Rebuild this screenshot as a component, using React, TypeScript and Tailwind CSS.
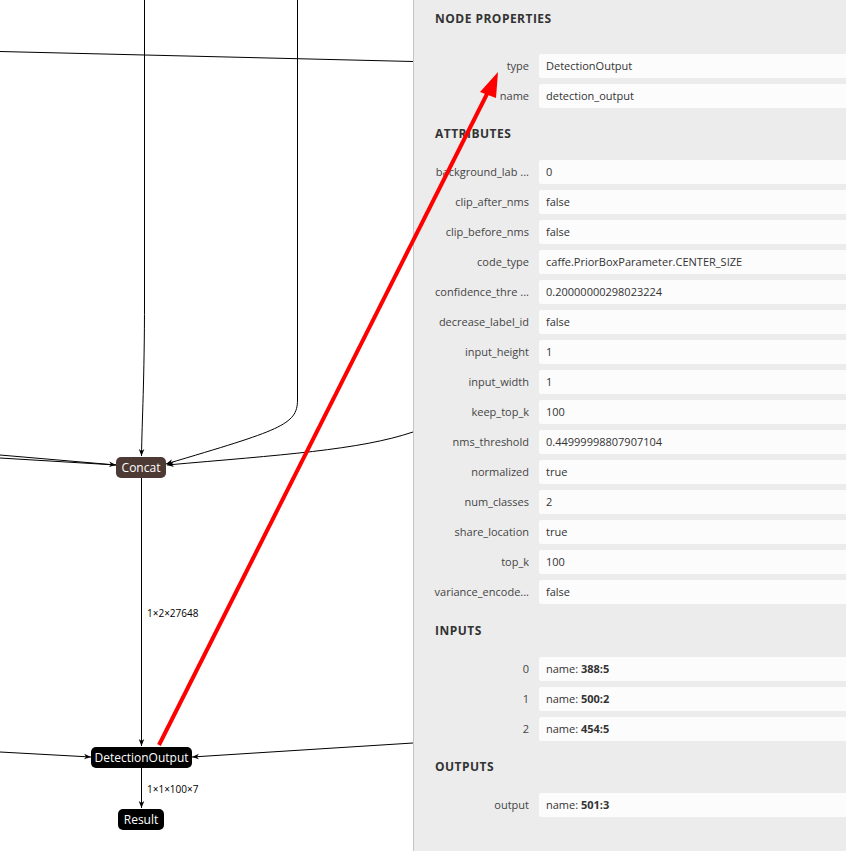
import React from 'react'

const font = { fontFamily: '"Open Sans", "Noto Sans", sans-serif' }

interface Row {
  label: string
  value: React.ReactNode
}

const props: Row[] = [
  { label: 'type', value: 'DetectionOutput' },
  { label: 'name', value: 'detection_output' },
]

const attributes: Row[] = [
  { label: 'background_lab ...', value: '0' },
  { label: 'clip_after_nms', value: 'false' },
  { label: 'clip_before_nms', value: 'false' },
  { label: 'code_type', value: 'caffe.PriorBoxParameter.CENTER_SIZE' },
  { label: 'confidence_thre ...', value: '0.20000000298023224' },
  { label: 'decrease_label_id', value: 'false' },
  { label: 'input_height', value: '1' },
  { label: 'input_width', value: '1' },
  { label: 'keep_top_k', value: '100' },
  { label: 'nms_threshold', value: '0.44999998807907104' },
  { label: 'normalized', value: 'true' },
  { label: 'num_classes', value: '2' },
  { label: 'share_location', value: 'true' },
  { label: 'top_k', value: '100' },
  { label: 'variance_encode...', value: 'false' },
]

const named = (n: string) => (
  <span>
    name: <span className="font-bold">{n}</span>
  </span>
)

const inputs: Row[] = [
  { label: '0', value: named('388:5') },
  { label: '1', value: named('500:2') },
  { label: '2', value: named('454:5') },
]

const outputs: Row[] = [{ label: 'output', value: named('501:3') }]

function Section({ title, rows, className, listClass }: { title: string; rows: Row[]; className: string; listClass: string }) {
  return (
    <div className={className}>
      <div className="pl-[21px] h-4 leading-4 text-[12px] font-bold tracking-[0.04em] text-[#333]">
        {title}
      </div>
      <div className={`flex flex-col gap-[6px] ${listClass}`}>
        {rows.map(r => (
          <div key={r.label} className="flex items-center h-6">
            <div className="w-[125px] pr-[10px] text-right text-[11px] text-[#444] whitespace-nowrap overflow-hidden">
              {r.label}
            </div>
            <div className="flex-1 h-6 bg-[#fcfcfc] rounded-l-[2px] pl-[7px] flex items-center text-[11px] text-[#333] whitespace-nowrap">
              {r.value}
            </div>
          </div>
        ))}
      </div>
    </div>
  )
}

function GraphNode({ label, className }: { label: string; className: string }) {
  return (
    <div
      className={`absolute h-[21px] rounded-[5px] flex items-center justify-center text-[12px] text-white whitespace-nowrap ${className}`}
    >
      {label}
    </div>
  )
}

function Graph() {
  return (
    <div className="relative w-[413px] h-full bg-white overflow-hidden">
      <svg className="absolute inset-0" width="413" height="851">
        <defs>
          <marker id="ah" viewBox="0 0 10 10" refX="10" refY="5" markerWidth="7" markerHeight="7" orient="auto">
            <path d="M0,1 L10,5 L0,9 L3,5 Z" fill="#000" />
          </marker>
        </defs>
        <g fill="none" stroke="#000" strokeWidth="1">
          <path d="M0,51.5 L413,61.5" />
          <path d="M144.5,0 L144.5,300 C144.5,380 142,420 141.5,456" markerEnd="url(#ah)" />
          <path d="M297.5,0 L297.5,400 C297.5,425 280,430 166,464" markerEnd="url(#ah)" />
          <path d="M413,432 C360,450 280,455 167,465" markerEnd="url(#ah)" />
          <path d="M0,455 L116,465" markerEnd="url(#ah)" />
          <path d="M0,458 L116,465" />
          <path d="M141.5,478 L141.5,746" markerEnd="url(#ah)" />
          <path d="M0,752 L91,757" markerEnd="url(#ah)" />
          <path d="M413,743 L192,757" markerEnd="url(#ah)" />
          <path d="M141.5,767 L141.5,808" markerEnd="url(#ah)" />
        </g>
      </svg>
      <GraphNode label="Concat" className="left-[116px] top-[457px] w-[50px] bg-[#4e3a34]" />
      <GraphNode label="DetectionOutput" className="left-[91px] top-[747px] w-[101px] bg-black" />
      <GraphNode label="Result" className="left-[118px] top-[809px] w-[46px] bg-black" />
      <div className="absolute left-[147px] top-[606px] text-[10px] text-black">1×2×27648</div>
      <div className="absolute left-[147px] top-[782px] text-[10px] text-black">1×1×100×7</div>
    </div>
  )
}

export default function App() {
  return (
    <div className="relative w-[846px] h-[851px] flex overflow-hidden" style={font}>
      <Graph />
      <div className="flex-1 h-full bg-[#ececec] border-l border-[#c4c4c4] pt-[11px] overflow-hidden">
        <Section title="NODE PROPERTIES" rows={props} className="" listClass="mt-[27px]" />
        <Section title="ATTRIBUTES" rows={attributes} className="mt-[18px]" listClass="mt-[18px]" />
        <Section title="INPUTS" rows={inputs} className="mt-[19px]" listClass="mt-[18px]" />
        <Section title="OUTPUTS" rows={outputs} className="mt-[18px]" listClass="mt-[18px]" />
      </div>
      {/* red annotation arrow */}
      <svg className="absolute inset-0 pointer-events-none" width="846" height="851">
        <line x1="159" y1="745" x2="488" y2="92" stroke="#ff0000" strokeWidth="4" />
        <polygon points="498,72 480,92 496,98" fill="#ff0000" />
      </svg>
    </div>
  )
}
